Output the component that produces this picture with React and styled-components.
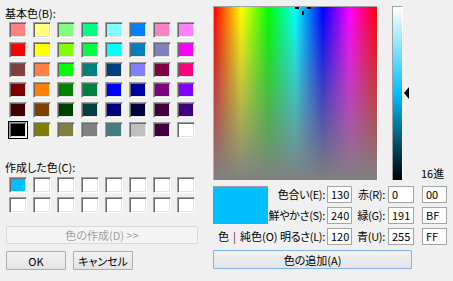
import styled, { createGlobalStyle } from 'styled-components';

const GlobalStyle = createGlobalStyle`
    html, body {
        margin: 0;
        padding: 0;
        background: #f0f0f0;
    }
    body {
        font-family: "Noto Sans CJK JP", "Noto Sans", sans-serif;
        font-size: 11px;
        font-feature-settings: "palt";
        color: #000;
    }
`;

const BASIC = [
    '#ff8080', '#ffff80', '#80ff80', '#00ff80', '#80ffff', '#0080ff', '#ff80c0', '#ff80ff',
    '#ff0000', '#ffff00', '#80ff00', '#00ff40', '#00ffff', '#0080c0', '#8080c0', '#ff00ff',
    '#804040', '#ff8040', '#00ff00', '#008080', '#004080', '#8080ff', '#800040', '#ff0080',
    '#800000', '#ff8000', '#008000', '#008040', '#0000ff', '#0000a0', '#800080', '#8000ff',
    '#400000', '#804000', '#004000', '#004040', '#000080', '#000040', '#400040', '#400080',
    '#000000', '#808000', '#808040', '#808080', '#408080', '#c0c0c0', '#400040', '#ffffff',
];

const CUSTOM = ['#00bfff', ...Array(15).fill('#ffffff')];

const Dialog = styled.div`
    width: 453px;
    height: 281px;
    display: flex;
    overflow: hidden;
`;

const LeftPane = styled.div`
    width: 213px;
    padding-left: 5px;
    box-sizing: border-box;
    display: flex;
    flex-direction: column;
`;

const GroupLabel = styled.div`
    line-height: 14px;
    margin-top: ${(p) => p.$top}px;
    white-space: nowrap;
`;

const SwatchGrid = styled.div`
    display: grid;
    grid-template-columns: repeat(8, 18px);
    grid-auto-rows: 16px;
    column-gap: 6px;
    row-gap: 4px;
    margin: ${(p) => p.$top}px 0 0 4px;
`;

const Swatch = styled.div`
    box-sizing: border-box;
    background: ${(p) => p.$color};
    border: 1px solid;
    border-color: #a0a0a0 #ffffff #ffffff #a0a0a0;
    box-shadow: inset 1px 1px 0 #696969, inset -1px -1px 0 #e3e3e3;
    outline: ${(p) => (p.$selected ? '1px solid #000' : 'none')};
`;

const Button = styled.div`
    box-sizing: border-box;
    height: ${(p) => p.$h || 18}px;
    width: ${(p) => p.$w}px;
    display: flex;
    align-items: center;
    justify-content: center;
    white-space: nowrap;
    line-height: 14px;
    border: 1px solid ${(p) => (p.$focus ? '#7eb4ea' : '#adadad')};
    border-radius: 1px;
    background: linear-gradient(#f2f2f2, #e4e4e4);
`;

const DisabledButton = styled(Button)`
    border-color: #d9d9d9;
    background: #f4f4f4;
    color: #a0a0a0;
    margin: 13px 0 0 1px;
`;

const ButtonRow = styled.div`
    display: flex;
    gap: 7px;
    margin: 7px 0 0 1px;
`;

const RightPane = styled.div`
    display: flex;
    flex-direction: column;
    padding-top: 6px;
`;

const TopRow = styled.div`
    display: flex;
    height: 174px;
`;

const HueSat = styled.div`
    position: relative;
    width: 165px;
    height: 174px;
    box-sizing: border-box;
    border-top: 1px solid #a0a0a0;
    border-left: 1px solid #b0b0b0;
    border-right: 1px solid #ffffff;
    background:
        linear-gradient(to bottom, rgba(128, 128, 128, 0), rgb(128, 128, 128)),
        linear-gradient(to right, #f00 0%, #ff0 16.67%, #0f0 33.33%, #0ff 50%, #00f 66.67%, #f0f 83.33%, #f00 100%);
`;

const Cross = styled.svg`
    position: absolute;
    left: 81px;
    top: 0;
`;

const LumWrap = styled.div`
    position: relative;
    width: 11px;
    margin-left: 14px;
`;

const LumBar = styled.div`
    height: 100%;
    box-sizing: border-box;
    border-top: 1px solid #a0a0a0;
    border-left: 1px solid #a0a0a0;
    border-right: 1px solid #ffffff;
    background: linear-gradient(to bottom, #ffffff 0%, #00bfff 50%, #000000 100%);
`;

const Arrow = styled.div`
    position: absolute;
    left: 12px;
    top: 81px;
    width: 0;
    height: 0;
    border-top: 6px solid transparent;
    border-bottom: 6px solid transparent;
    border-right: 5px solid #000;
`;

const HexTitle = styled.div`
    align-self: flex-end;
    margin-left: 18px;
    line-height: 14px;
`;

const BottomRow = styled.div`
    display: flex;
    margin-top: 6px;
`;

const PreviewCol = styled.div`
    width: 55px;
    display: flex;
    flex-direction: column;
`;

const Preview = styled.div`
    height: 38px;
    box-sizing: border-box;
    background: #00bfff;
    border-top: 1px solid #a0a0a0;
`;

const Caption = styled.div`
    display: flex;
    gap: 4px;
    margin: 5px 0 0 5px;
    line-height: 14px;
    white-space: nowrap;
`;

const Bar = styled.span`
    color: #702040;
`;

const Fields = styled.div`
    display: grid;
    grid-template-columns: 57px 25px 32px 26px 31px;
    grid-auto-rows: 17px;
    column-gap: 2px;
    row-gap: 4px;
`;

const FieldLabel = styled.div`
    text-align: right;
    line-height: 17px;
    white-space: nowrap;
    letter-spacing: -0.3px;
    padding-right: ${(p) => p.$pad || 0}px;
`;

const Field = styled.div`
    box-sizing: border-box;
    width: ${(p) => p.$w}px;
    justify-self: end;
    background: #fff;
    border: 1px solid #a5a5a5;
    padding-left: 3px;
    line-height: 15px;
`;

const AddButton = styled(Button)`
    margin-top: 5px;
`;

const ROWS = [
    ['色合い(E):', '130', '赤(R):', '0', '00'],
    ['鮮やかさ(S):', '240', '緑(G):', '191', 'BF'],
    ['明るさ(L):', '120', '青(U):', '255', 'FF'],
];

const App = () => {
    return (
        <Dialog>
            <GlobalStyle />
            <LeftPane>
                <GroupLabel $top={6}>基本色(B):</GroupLabel>
                <SwatchGrid $top={2}>
                    {BASIC.map((c, i) => (
                        <Swatch key={i} $color={c} $selected={i === 40} />
                    ))}
                </SwatchGrid>
                <GroupLabel $top={22}>作成した色(C):</GroupLabel>
                <SwatchGrid $top={3}>
                    {CUSTOM.map((c, i) => (
                        <Swatch key={i} $color={c} />
                    ))}
                </SwatchGrid>
                <DisabledButton $w={192}>色の作成(D) &gt;&gt;</DisabledButton>
                <ButtonRow>
                    <Button $w={60} $h={19}>OK</Button>
                    <Button $w={60} $h={19}>キャンセル</Button>
                </ButtonRow>
            </LeftPane>
            <RightPane>
                <TopRow>
                    <HueSat>
                        <Cross width="17" height="9" viewBox="0 0 17 9">
                            <rect x="0" y="0" width="4" height="2" fill="#000" />
                            <rect x="12" y="0" width="4" height="2" fill="#000" />
                            <rect x="7" y="4" width="2" height="4" fill="#000" />
                        </Cross>
                    </HueSat>
                    <LumWrap>
                        <LumBar />
                        <Arrow />
                    </LumWrap>
                    <HexTitle>16進</HexTitle>
                </TopRow>
                <BottomRow>
                    <PreviewCol>
                        <Preview />
                        <Caption>
                            <span>色</span>
                            <Bar>|</Bar>
                            <span>純色(O)</span>
                        </Caption>
                    </PreviewCol>
                    <Fields>
                        {ROWS.map((r) => [
                            <FieldLabel key={r[0]}>{r[0]}</FieldLabel>,
                            <Field key={r[0] + 'a'} $w={25}>{r[1]}</Field>,
                            <FieldLabel key={r[2]} $pad={1}>{r[2]}</FieldLabel>,
                            <Field key={r[2] + 'b'} $w={26}>{r[3]}</Field>,
                            <Field key={r[2] + 'c'} $w={25}>{r[4]}</Field>,
                        ])}
                    </Fields>
                </BottomRow>
                <AddButton $w={199} $h={19} $focus>色の追加(A)</AddButton>
            </RightPane>
        </Dialog>
    );
};

export default App;
